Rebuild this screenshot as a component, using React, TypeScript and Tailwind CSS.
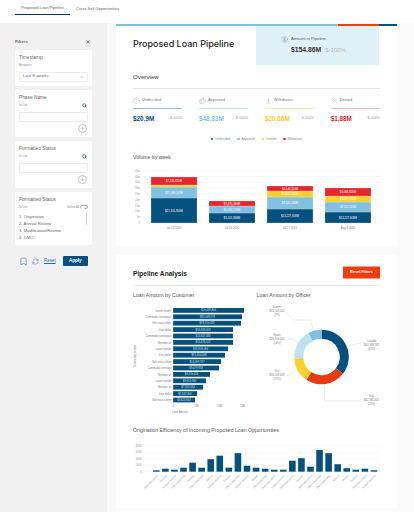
import React from "react";
import { ArrowDownToLine, Bookmark, ChevronDown, CircleDollarSign, CircleHelp, Plus, RefreshCw, Search, ThumbsUp, X } from "lucide-react";

const navy = "#04507f";
const sky = "#82c0df";
const yellow = "#fbd02e";
const red = "#e9242f";
const pale = "#bfe2f2";
const orange = "#e63c12";

function ListFilter({ title }: { title: string }) {
  return (
    <div className="h-[47px] rounded-[1px] bg-white px-[4px] pt-[3.5px]">
      <div className="text-[4.8px] leading-[7px] text-[#666]">{title}</div>
      <div className="mt-[2px] flex h-[5px] items-center justify-between pr-[1px] text-[3.2px] text-[#888]">
        In List
        <Search size={5} color={navy} strokeWidth={3} />
      </div>
      <div className="mt-[4px] h-[10px] rounded-[1px] border border-[#ececec]" />
      <div className="mt-[2.5px] flex justify-end pr-[1px]">
        <div className="flex h-[9px] w-[9px] items-center justify-center rounded-full border border-[#c4c4c4]">
          <Plus size={5} color="#999" />
        </div>
      </div>
    </div>
  );
}

function Sidebar() {
  return (
    <aside className="flex w-[107px] shrink-0 flex-col bg-[#f1f1f1] px-[15px] pt-[15px]">
      <div className="flex h-[8px] items-center justify-between pr-[1px]">
        <span className="text-[4.3px] font-bold text-[#666]">Filters</span>
        <X size={6} color="#555" />
      </div>
      <div className="mt-[4px] flex flex-col gap-[4px]">
        <div className="h-[36px] rounded-[1px] bg-white px-[4px] pt-[3.5px]">
          <div className="text-[4.8px] leading-[7px] text-[#666]">Timestamp</div>
          <div className="mt-[2px] h-[5px] text-[3.2px] leading-[5px] text-[#888]">Between</div>
          <div className="mt-[4px] flex h-[10px] items-center justify-between rounded-[1px] border border-[#ececec] pl-[3px] pr-[2px] text-[4.4px] text-[#666]">
            Last 8 weeks
            <ChevronDown size={6} color="#aaa" />
          </div>
        </div>
        <ListFilter title="Phase Name" />
        <ListFilter title="Formatted Status" />
        <div className="h-[53px] rounded-[1px] bg-white px-[4px] pt-[3.5px]">
          <div className="text-[4.8px] leading-[7px] text-[#666]">Formatted Status</div>
          <div className="mt-[2px] flex h-[5px] items-center justify-between text-[3.2px] text-[#888]">
            In List
            <span className="flex items-center gap-[1px] text-[2.9px]">
              Select All
              <span className="relative h-[4.5px] w-[8px] rounded-full border-[0.5px] border-[#aaa] bg-[#eee]">
                <span className="absolute left-0 top-0 h-[3.5px] w-[3.5px] rounded-full bg-white" />
              </span>
            </span>
          </div>
          <div className="relative mt-[3px] text-[4.2px] leading-[7.2px] text-[#666]">
            <div>1. Origination</div>
            <div>2. Annual Review</div>
            <div>3. Modification/Review</div>
            <div>4. DMC</div>
            <span className="absolute right-[1px] top-0 h-[12px] w-[1.5px] bg-[#d0d0d0]" />
          </div>
        </div>
      </div>
      <div className="mt-[11px] flex h-[10px] items-center pl-[4px]">
        <Bookmark size={9} color={navy} strokeWidth={1.2} />
        <RefreshCw size={7} color={navy} strokeWidth={1.2} className="ml-[4px]" />
        <span className="ml-[5px] text-[4.5px] text-[#2d6f9a] underline">Reset</span>
        <button className="ml-[7px] h-[10px] w-[25px] rounded-[1px] bg-[#04507f] text-[4.6px] font-bold text-white">Apply</button>
      </div>
    </aside>
  );
}

const metrics = [
  { icon: <CircleHelp size={7} color="#888" strokeWidth={1} />, label: "Undecided", value: "$20.9M", color: navy, line: "#9db9c9" },
  { icon: <ThumbsUp size={7} color="#888" strokeWidth={1} />, label: "Approved", value: "$48.33M", color: sky, line: "#c9dfe9" },
  { icon: <ArrowDownToLine size={7} color="#888" strokeWidth={1} />, label: "Withdrawn", value: "$20.86M", color: "#f7c92b", line: "#f6e9b4" },
  { icon: <X size={7} color="#888" strokeWidth={1} />, label: "Denied", value: "$1.88M", color: "#dc2b30", line: "#e8bcbc" },
];

function Metric({ m }: { m: (typeof metrics)[number] }) {
  return (
    <div>
      <div className="flex h-[8px] items-center gap-[2px] text-[4px] text-[#777]">
        {m.icon}
        {m.label}
      </div>
      <div className="mt-[4px] h-[1px]" style={{ background: m.line }} />
      <div className="mt-[6px] flex h-[7px] items-center justify-between">
        <span className="text-[6.4px] font-bold" style={{ color: m.color }}>{m.value}</span>
        <span className="text-[3.6px] text-[#999]">$-100%</span>
      </div>
    </div>
  );
}

function VolumeChart() {
  const bars = [
    { x: 35, s: [[33, 25, navy, "$21,101,850M"], [22, 11, sky, "$11,103,145M"], [20, 2, yellow, ""], [12, 8, red, "$7,135,870M"]] },
    { x: 93, s: [[48, 10, navy, "$5,101,869M"], [41, 7, sky, "$5,058,170M"], [36, 5, red, "$5,470,340M"]] },
    { x: 151, s: [[44, 14, navy, "$13,227,658M"], [32, 12, sky, "$8,024,545M"], [26, 6, yellow, "$7,024,550M"], [21, 5, red, "$4,144,110M"]] },
    { x: 209, s: [[47, 11, navy, "$13,227,658M"], [37, 10, sky, "$7,113,110M"], [31, 6, yellow, "$5,067,050M"], [23, 8, red, "$5,068,820M"]] },
  ] as const;
  const dates = ["Jul 13 2020", "Jul 20 2020", "Jul 27 2020", "Aug 3 2020"];
  const ticks = ["0", "5m", "10m", "15m", "20m", "25m", "30m", "35m", "40m", "45m"];
  return (
    <svg width="281" height="70" viewBox="0 0 281 70" className="block">
      {ticks.map((t, i) => (
        <g key={t}>
          <line x1="27" x2="264" y1={58 - i * 5.8} y2={58 - i * 5.8} stroke="#f3f3f3" strokeWidth="0.5" />
          <text x="24" y={59 - i * 5.8} textAnchor="end" fontSize="2.6" fill="#999">{t}</text>
        </g>
      ))}
      {bars.map((b, i) => (
        <g key={b.x}>
          {b.s.map(([y, h, c, t]) => (
            <g key={String(y)}>
              <rect x={b.x} y={y} width="46" height={h} fill={c} stroke="#fff" strokeOpacity="0.5" strokeWidth="0.4" />
              {t && <text x={b.x + 23} y={y + h / 2 + 1} textAnchor="middle" fontSize="2.8" fill="#fff">{t}</text>}
            </g>
          ))}
          <text x={b.x + 23} y="64" textAnchor="middle" fontSize="2.8" fill="#777">{dates[i]}</text>
        </g>
      ))}
    </svg>
  );
}

const customers: [string, number, string][] = [
  ["Lorem ipsum", 71, "$20,049,804"], ["Commodo consequat", 69, "$20,049,274"], ["Velit esse cillum", 68, "$19,210,025"],
  ["Irure dolor", 60, "$16,630,003"], ["Commodo consequat", 60, "$16,647,480"], ["Nentatur at", 60, "$16,676,102"],
  ["Lorem ipsum", 55, "$16,918,084"], ["Irure dolor", 52, "$15,454,048"], ["Velit esse cillum", 48, "$14,069,757"],
  ["Commodo consequ", 46, "$9,479,958"], ["Nentatur at", 37, "$9,216,024"], ["Lorem ipsum", 33, "$9,610,680"],
  ["Nentatur at", 30, "$7,551,564"], ["Irure dolor", 24, "$5,532,800"], ["Velit esse cillum", 22, "$3,620,644"],
];

function CustomerChart() {
  return (
    <svg width="123" height="112" viewBox="0 0 123 112" className="block">
      {customers.map(([n, w, v], i) => (
        <g key={i}>
          <text x="38" y={7.6 + i * 6.4} textAnchor="end" fontSize="2.7" fill="#777">{n}</text>
          <rect x="40" y={4 + i * 6.4} width={w} height="4.8" fill={navy} />
          <text x={40 + w / 2} y={7.4 + i * 6.4} textAnchor="middle" fontSize="2.7" fill="#cfe2ee">{v}</text>
        </g>
      ))}
      <line x1="40" x2="40" y1="2" y2="100" stroke="#ddd" strokeWidth="0.4" />
      {["0", "5M", "10M", "15M"].map((t, i) => (
        <text key={t} x={40.5 + i * 23} y="103" textAnchor="middle" fontSize="2.6" fill="#777">{t}</text>
      ))}
      <text x="47" y="109" textAnchor="middle" fontSize="2.6" fill="#777">Loan Amount</text>
      <text x="0" y="0" transform="translate(3 52) rotate(-90)" textAnchor="middle" fontSize="2.7" fill="#777">Commodity Lender</text>
    </svg>
  );
}

function arc(cx: number, cy: number, R: number, r: number, a: number, b: number) {
  const p = (rad: number, t: number) => {
    const x = cx + rad * Math.sin((t * Math.PI) / 180);
    const y = cy - rad * Math.cos((t * Math.PI) / 180);
    return `${x.toFixed(2)} ${y.toFixed(2)}`;
  };
  const large = b - a > 180 ? 1 : 0;
  return `M${p(R, a)} A${R} ${R} 0 ${large} 1 ${p(R, b)} L${p(r, b)} A${r} ${r} 0 ${large} 0 ${p(r, a)} Z`;
}

function DonutChart() {
  const segs: [number, number, string][] = [
    [0, 128, navy], [128, 214, orange], [214, 267, yellow], [267, 331, pale], [331, 360, sky],
  ];
  const cx = 64.5, cy = 53;
  const labels = [
    { x: 114.5, y: 41, t: ["Canada", "$60,568,583", "(42%)"] },
    { x: 114.5, y: 96, t: ["Italy", "$32,565,002", "(25%)"] },
    { x: 20, y: 71, t: ["Visit", "$26,503,003", "(17%)"] },
    { x: 20, y: 35, t: ["Spain", "$26,503,003", "(14%)"] },
    { x: 20, y: 7, t: ["Lorem", "$24,503,002", "(7%)"] },
  ];
  return (
    <svg width="124" height="112" viewBox="0 0 124 112" className="block">
      {segs.map(([a, b, c]) => (
        <path key={c} d={arc(cx, cy, 27.3, 18.2, a, b)} fill={c} />
      ))}
      <g fill="none" stroke="#c4c4c4" strokeWidth="0.35">
        <path d="M90.5 42 L108.5 38" />
        <path d="M67.5 81 L67.5 97 L109.5 97" />
        <path d="M30 72 L39 67" />
        <path d="M29.5 35 L35.5 35 L42.5 40" />
        <path d="M28.5 8 L36.5 16 L53.5 16 L56.5 27" />
      </g>
      {labels.map((l) => (
        <text key={l.t[0]} x={l.x} y={l.y - 2.6} textAnchor="middle" fontSize="2.7" fill="#777">
          {l.t.map((s, i) => (
            <tspan key={s} x={l.x} dy={i === 0 ? 0 : 3.6}>{s}</tspan>
          ))}
        </text>
      ))}
    </svg>
  );
}

const eff: [string, number][] = [
  ["Velit esse cillum", 1.4], ["Excerpt", 3], ["Tempor incidunt", 2], ["Cillum dolo velit", 4], ["Excerpt", 9], ["Cillum dolo velit", 4],
  ["Aliquet", 12.5], ["Tempor incidunt", 16], ["Excerpt", 4], ["Cillum dolo velit", 18.5], ["Tempor incidunt", 6], ["Aliquet", 4],
  ["Cillum dolo velit", 3], ["Velit esse cillum", 2], ["Tempor incidunt", 2], ["Velit esse cillum", 11], ["Excerpt", 13.5], ["Velit esse cillum", 5],
  ["Cillum dolo velit", 21.7], ["Cillum dolo velit", 18.5], ["Aliquet", 7.5], ["Aliquet", 3.5], ["Excerpt", 2], ["Velit esse cillum", 3], ["Tempor incidunt", 1.4],
];

function EfficiencyChart() {
  return (
    <svg width="281" height="56" viewBox="0 0 281 56" className="block">
      {["0", "200K", "400K", "600K", "800K"].map((t, i) => (
        <g key={t}>
          <line x1="29" x2="264" y1={32.7 - i * 6.4} y2={32.7 - i * 6.4} stroke="#f3f3f3" strokeWidth="0.5" />
          <text x="25.7" y={33.6 - i * 6.4} textAnchor="end" fontSize="2.6" fill="#999">{t}</text>
        </g>
      ))}
      {eff.map(([n, h], i) => {
        const x = 37 + i * 9.07;
        return (
          <g key={i}>
            <rect x={x} y={32.7 - h} width="6.6" height={h} fill={navy} />
            <text x="0" y="0" transform={`translate(${x + 5} 37) rotate(-45)`} textAnchor="end" fontSize="2.6" fill="#888">{n}</text>
          </g>
        );
      })}
    </svg>
  );
}

export default function App() {
  return (
    <div className="flex h-[512px] w-[414px] flex-col overflow-hidden bg-[#fafafa] font-['Liberation_Sans',Arial,sans-serif]">
      <nav className="flex h-[23px] shrink-0 items-start bg-white pl-[15px] text-[4px] text-[#666]">
        <div className="flex h-[15px] w-[55px] items-center justify-center border-b border-[#0b2f63] pt-[2px]">Proposed Loan Pipeline</div>
        <div className="flex h-[15px] items-center pl-[6px] pt-[2px]">Cross Sell Opportunities</div>
      </nav>
      <div className="flex min-h-0 flex-1">
        <Sidebar />
        <main className="flex w-[290px] flex-col gap-[9px] pl-[9px] pt-[1px]">
          <section className="h-[222px] w-[281px] shrink-0 bg-white">
            <div className="flex h-[2px]">
              <div className="w-[222px] bg-[#82c0df]" />
              <div className="w-[41px] bg-[#e9400f]" />
              <div className="w-[18px] bg-[#04507f]" />
            </div>
            <div className="flex h-[39px]">
              <h1 className="flex-1 pl-[17px] pt-[12px] font-['Inter',sans-serif] text-[9px] font-medium leading-[12px] text-[#1a1a1a]">Proposed Loan Pipeline</h1>
              <div className="mr-[18px] w-[123px] bg-[#e0f0f7] pl-[25px] pt-[10px]">
                <div className="flex h-[7px] items-center gap-[3px] text-[4.2px] text-[#555]">
                  <CircleDollarSign size={7} color="#777" strokeWidth={1} />
                  Amount in Pipeline
                </div>
                <div className="ml-[10px] mt-[2px] flex items-baseline gap-[4px]">
                  <span className="text-[6.8px] font-bold text-[#333]">$154.86M</span>
                  <span className="text-[6px] text-[#b4bcc0]">$-100%</span>
                </div>
              </div>
            </div>
            <div className="mx-[17px]">
              <div className="mt-[7px] h-[16px] pt-0 text-[6.2px] font-medium leading-[10px] text-[#333]">Overview</div>
              <div className="h-px bg-[#e3e8ea]" />
              <div className="mt-[7px] grid grid-cols-4 gap-x-[16.5px]">
                {metrics.map((m) => <Metric key={m.label} m={m} />)}
              </div>
              <div className="mt-[14px] flex h-[6px] items-center justify-center gap-[7px] text-[3.1px] text-[#888]">
                {[[navy, "Undecided"], [sky, "Approved"], [yellow, "Denied"], [red, "Withdrawn"]].map(([c, t]) => (
                  <span key={t} className="flex items-center gap-[2px]">
                    <span className="h-[2.5px] w-[2.5px] rounded-full" style={{ background: c }} />
                    {t}
                  </span>
                ))}
              </div>
              <div className="mt-[11.5px] text-[5.2px] leading-[7px] text-[#555]">Volume by week</div>
            </div>
            <div className="mt-[4.5px]">
              <VolumeChart />
            </div>
          </section>
          <section className="h-[253px] w-[281px] shrink-0 bg-white">
            <div className="mx-[17px] flex h-[31px] items-center justify-between border-b border-[#e6eeee] pt-[8px]">
              <h2 className="text-[6.6px] font-bold text-[#222]">Pipeline Analysis</h2>
              <button className="h-[12px] w-[37px] -translate-y-[1.5px] bg-[#f03c0f] text-[3.8px] font-bold text-white">Reset Filters</button>
            </div>
            <div className="ml-[17px] mt-[6px] grid grid-cols-[123.5px_124px]">
              <div>
                <div className="text-[5.2px] leading-[7px] text-[#555]">Loan Amount by Customer</div>
                <div className="mt-[5px]"><CustomerChart /></div>
              </div>
              <div>
                <div className="text-[5.2px] leading-[7px] text-[#555]">Loan Amount by Officer</div>
                <div className="mt-[5px]"><DonutChart /></div>
              </div>
            </div>
            <div className="mx-[17px] mt-[10.5px] text-[5.2px] leading-[7px] text-[#555]">Origination Efficiency of Incoming Proposed Loan Opportunities</div>
            <div className="mt-[5.5px]"><EfficiencyChart /></div>
          </section>
        </main>
      </div>
    </div>
  );
}
